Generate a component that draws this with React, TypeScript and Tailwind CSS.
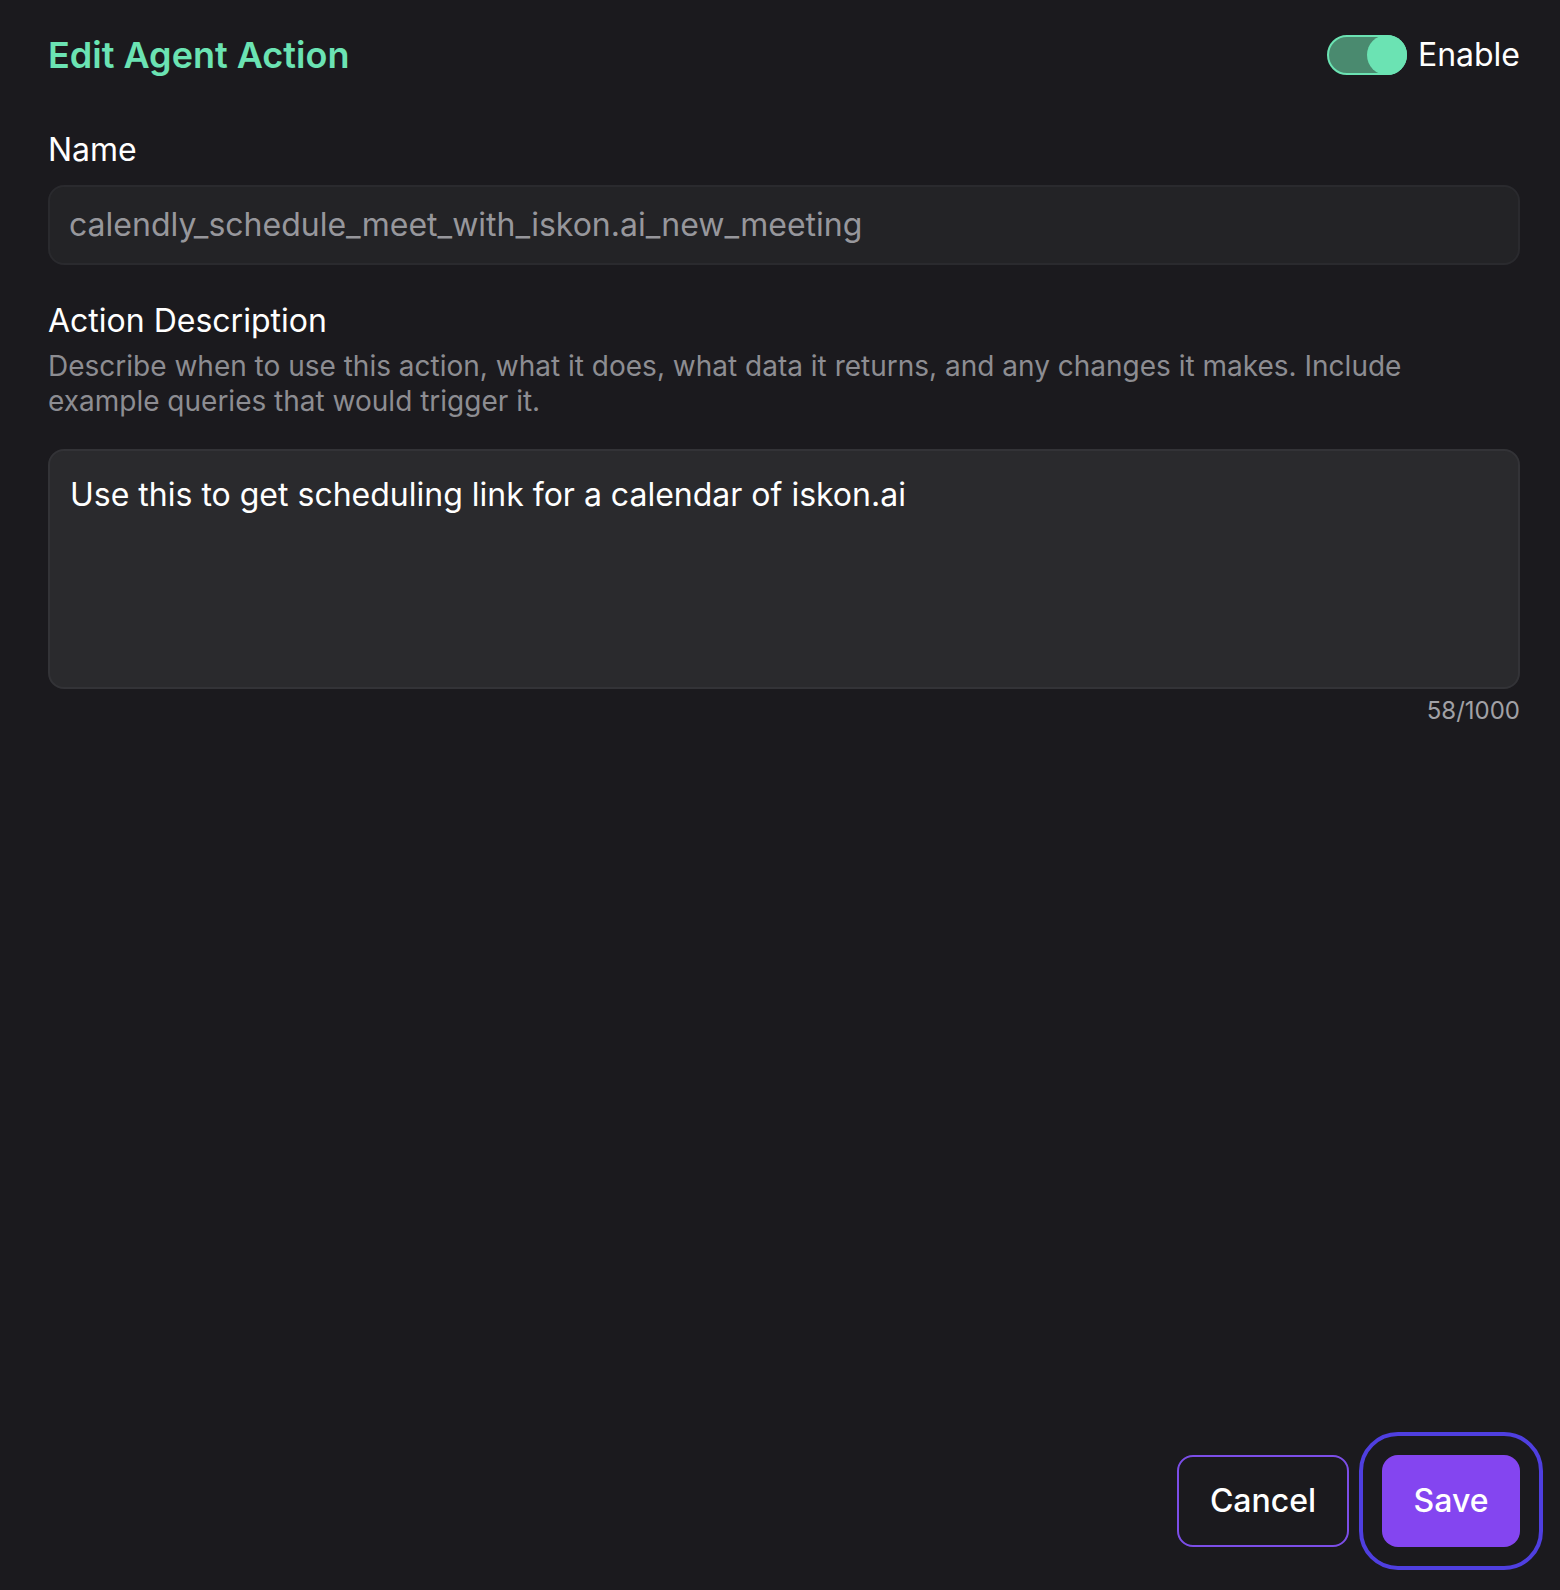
import { useState } from 'react';

const font = { fontFamily: 'Inter, "Noto Sans", sans-serif' };

const Toggle = ({ on, onChange }: { on: boolean; onChange: (v: boolean) => void }) => (
  <button
    type="button"
    onClick={() => onChange(!on)}
    className={`relative h-[40px] w-[80px] rounded-full border-2 ${on ? 'border-[#6be3b3] bg-[#4a8a6f]' : 'border-[#3f3f46] bg-[#2a2a2e]'}`}
  >
    <span
      className={`absolute top-[-2px] h-[40px] w-[40px] rounded-full ${on ? 'right-[-2px] bg-[#6be3b3]' : 'left-[-2px] bg-[#a1a1aa]'}`}
    />
  </button>
);

const App = () => {
  const [enabled, setEnabled] = useState(true);
  const [desc, setDesc] = useState('Use this to get scheduling link for a calendar of iskon.ai');

  return (
    <div className="flex min-h-[1590px] w-full flex-col bg-[#1b1a1e] pl-[48px] pr-[40px] pt-[35px] pb-[43px] text-white" style={font}>
      <div className="flex h-[40px] items-center">
        <h1 className="text-[36px] font-semibold leading-[40px] text-[#6be3b3]">Edit Agent Action</h1>
        <div className="ml-auto flex items-center gap-[11px]">
          <Toggle on={enabled} onChange={setEnabled} />
          <span className="text-[32px] leading-[40px]">Enable</span>
        </div>
      </div>

      <label className="mt-[55px] text-[32px] leading-[40px]">Name</label>
      <div className="mt-[15px] flex h-[80px] items-center rounded-[16px] border-2 border-[#2a2a2e] bg-[#232326] px-[19px] text-[32px] text-[#97979c]">
        calendly_schedule_meet_with_iskon.ai_new_meeting
      </div>

      <label className="mt-[36px] text-[32px] leading-[40px]">Action Description</label>
      <p className="mt-[8px] text-[28px] leading-[35px] text-[#8d8d92]">
        Describe when to use this action, what it does, what data it returns, and any changes it makes. Include
        <br />
        example queries that would trigger it.
      </p>
      <textarea
        value={desc}
        onChange={(e) => setDesc(e.target.value)}
        className="mt-[30px] h-[240px] resize-none rounded-[16px] border-2 border-[#333337] bg-[#2a2a2d] p-[20px] text-[32px] leading-[48px] text-white outline-none"
        style={font}
      />
      <div className="mt-[6px] text-right text-[24px] leading-[32px] text-[#a1a1a6]">{desc.length}/1000</div>

      <div className="mt-auto flex justify-end gap-[33px]">
        <button className="h-[92px] w-[172px] rounded-[16px] border-2 border-[#7c4ee8] text-[32px] font-medium text-white">
          Cancel
        </button>
        <button className="h-[92px] w-[138px] rounded-[16px] bg-[#8445f0] text-[32px] font-medium text-white outline-4 outline-offset-[19px] outline-[#4f3fe0]">
          Save
        </button>
      </div>
    </div>
  );
};

export default App;
